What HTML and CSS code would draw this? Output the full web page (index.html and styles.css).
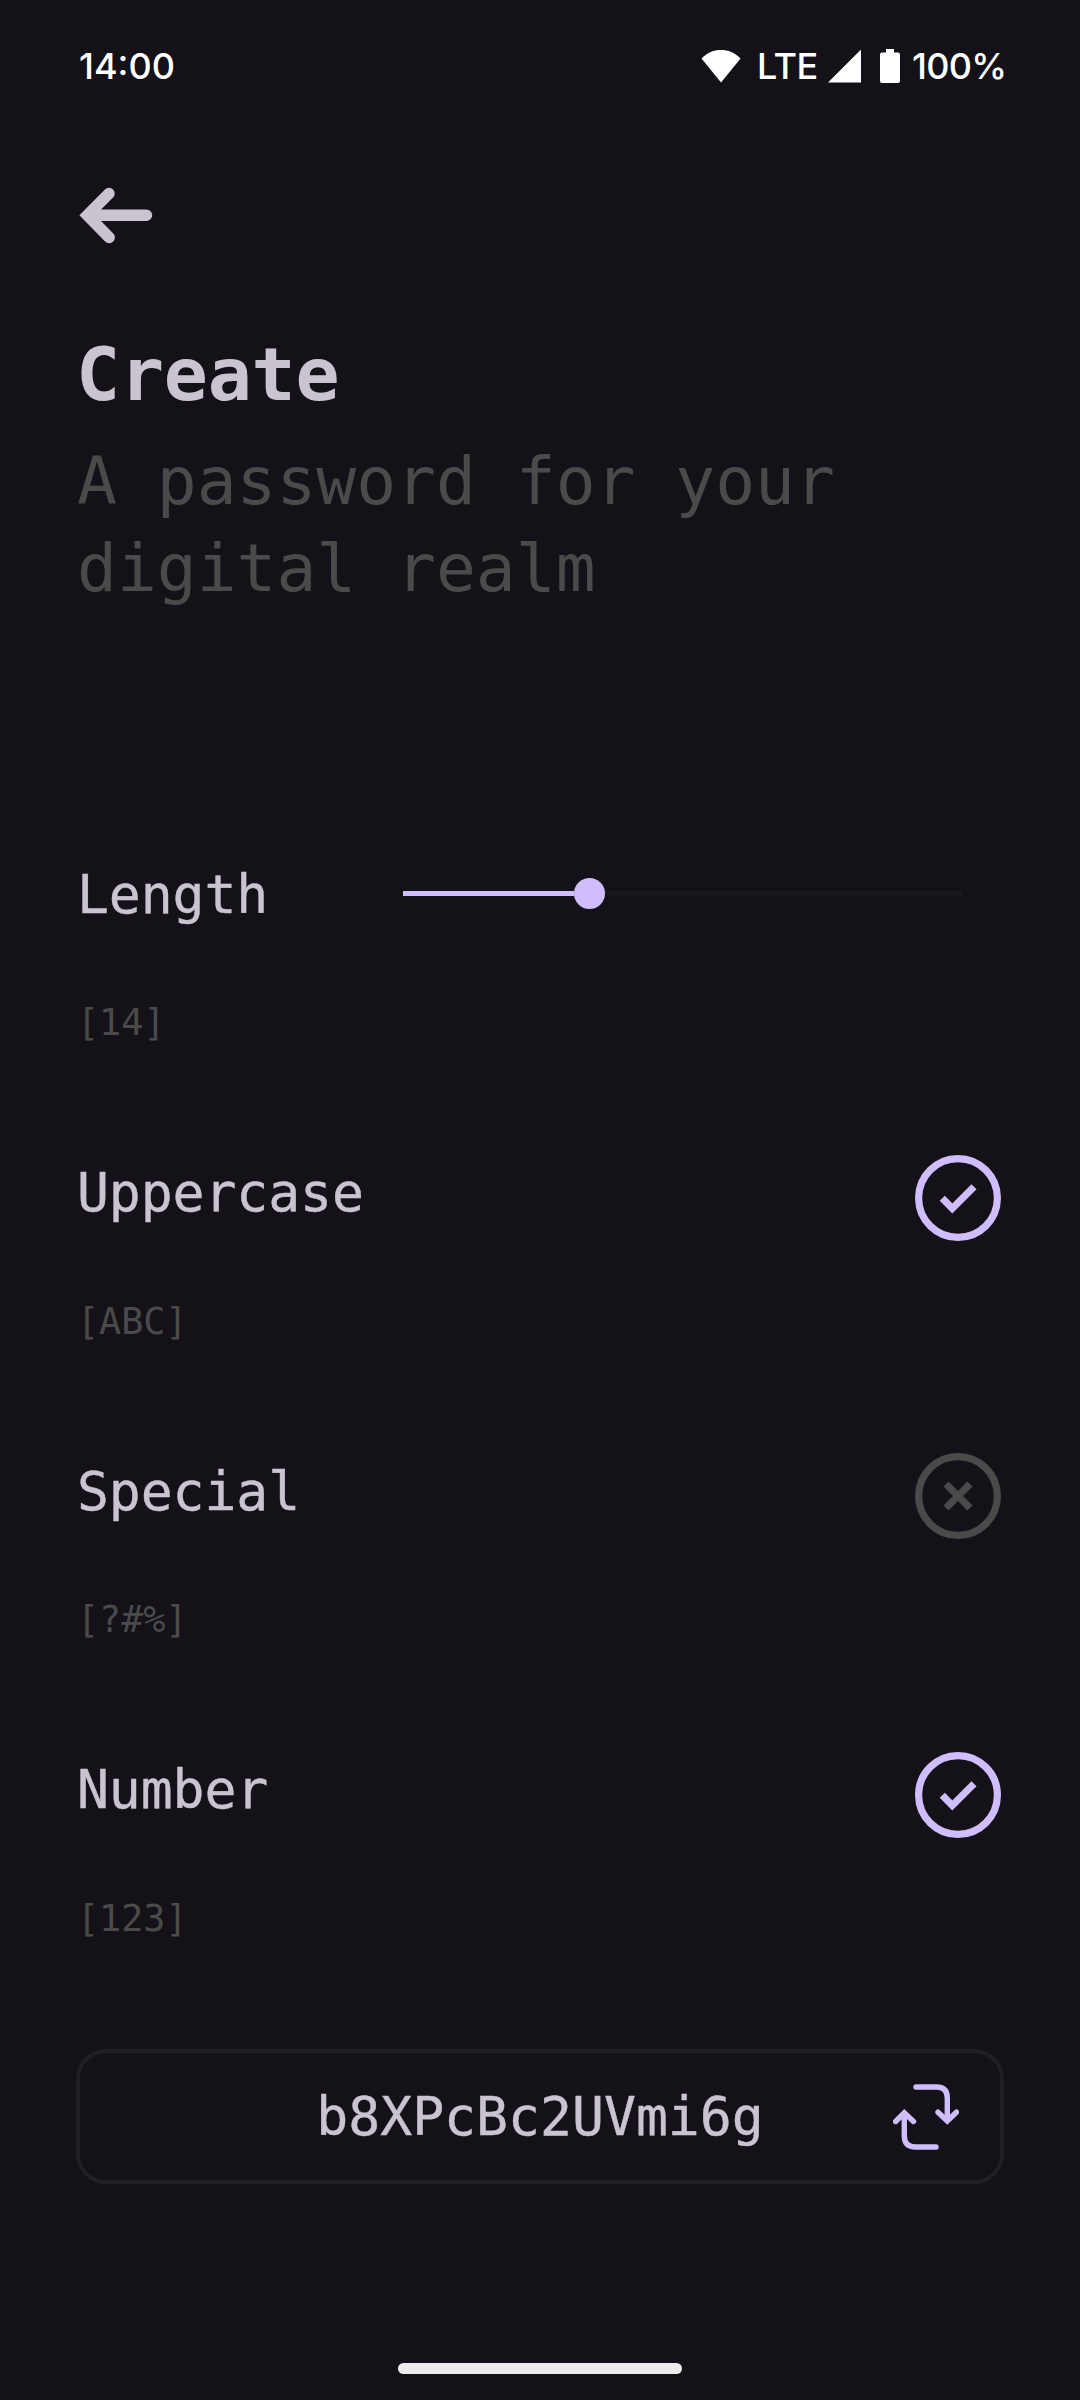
FILE: index.html
```html
<!DOCTYPE html>
<html lang="en">
<head>
<meta charset="utf-8">
<title>Create password</title>
<link rel="stylesheet" href="styles.css">
</head>
<body>
<div class="screen">
  <div class="status">
    <span class="time">14:00</span>
    <svg class="wifi" width="40" height="34" viewBox="0 0 40 34"><path d="M20 33.500 0.500 9.500C6 3.500 13 1 20 1s14 2.500 19.500 8.500z" fill="#fff"/></svg>
    <span class="lte">LTE</span>
    <svg class="signal" width="34" height="34" viewBox="0 0 34 34"><path d="M0 33.500 33 0.500v33z" fill="#fff"/></svg>
    <svg class="battery" width="20" height="34" viewBox="0 0 20 34"><path d="M6 0h8v3.500h4a2 2 0 0 1 2 2V32a2 2 0 0 1-2 2H2a2 2 0 0 1-2-2V5.500a2 2 0 0 1 2-2h4z" fill="#fff"/></svg>
    <span class="percent">100%</span>
  </div>

  <main class="content">
    <svg class="back" width="78" height="60" viewBox="0 0 78 60" fill="none" stroke="#cac4d0" stroke-width="11.400" stroke-linecap="round"><path d="M31 7.500 9.400 29.200 31.200 51.500M16 29.200H68.500"/></svg>
    <h1 class="title">Create</h1>
    <p class="subtitle">A password for your<br>digital realm</p>

    <section class="options">
      <div class="option">
        <div class="head">
          <span class="label">Length</span>
          <div class="slider"><div class="fill"></div><div class="thumb"></div><div class="rest"></div></div>
        </div>
        <div class="hint">[14]</div>
      </div>
      <div class="option">
        <div class="head">
          <span class="label">Uppercase</span>
          <svg class="toggle on" viewBox="0 0 86 86"><circle cx="43" cy="43" r="39.400"/><path d="M27.300 43.300 37.300 53.500 59 31.800"/></svg>
        </div>
        <div class="hint">[ABC]</div>
      </div>
      <div class="option">
        <div class="head">
          <span class="label">Special</span>
          <svg class="toggle off" viewBox="0 0 86 86"><circle cx="43" cy="43" r="39.400"/><path d="M31 31 55 55M55 31 31 55"/></svg>
        </div>
        <div class="hint">[?#%]</div>
      </div>
      <div class="option">
        <div class="head">
          <span class="label">Number</span>
          <svg class="toggle on" viewBox="0 0 86 86"><circle cx="43" cy="43" r="39.400"/><path d="M27.300 43.300 37.300 53.500 59 31.800"/></svg>
        </div>
        <div class="hint">[123]</div>
      </div>
    </section>

    <div class="result">
      <span class="password">b8XPcBc2UVmi6g</span>
      <svg class="refresh" width="66" height="68" viewBox="0 0 66 68" fill="none" stroke="#cfbdfe" stroke-width="5.400" stroke-linecap="round"><path d="M23 4H43.500Q54.300 4 54.300 15V37M45 29.200 54.300 38 63.400 29.200M43 64H22.500Q11.300 64 11.300 53V31M2.600 38.500 11.300 29.800 20.500 38.500"/></svg>
    </div>
  </main>

  <div class="gesture"></div>
</div>
</body>
</html>
```
FILE: styles.css
```css
* { box-sizing: border-box; }

body {
  margin: 0;
  background: #141218;
}

.screen {
  display: flex;
  flex-direction: column;
  width: 1080px;
  height: 2400px;
  background: #141218;
  color: #cac4d0;
  font-family: "DejaVu Sans Mono", monospace;
}

.status {
  display: flex;
  align-items: center;
  height: 132px;
  padding: 0 76px 0 79px;
  color: #fff;
  font: 500 36px/1 Inter, sans-serif;
}

.time { margin-right: auto; }
.lte { width: 60px; margin-left: 16px; letter-spacing: -0.500px; }
.signal { margin-left: 11px; }
.battery { margin: 0 0 0 18px; }
.percent { width: 92px; margin-left: 12px; letter-spacing: -0.700px; }

.content {
  display: flex;
  flex-direction: column;
  padding: 0 76px;
}

.back { margin: 54px 0 0 2px; }

.title {
  margin: 80.500px 0 0;
  font-size: 73.250px;
  line-height: 96px;
  letter-spacing: -0.200px;
}

.subtitle {
  margin: 15.500px 0 0;
  padding-left: 1px;
  color: #4a4a4a;
  font-size: 66.250px;
  line-height: 87px;
}

.options { margin-top: 244px; }

.option { height: 298.500px; }

.head {
  display: flex;
  align-items: center;
  justify-content: space-between;
  height: 86px;
}

.label {
  padding: 0 0 9px 1px;
  font-size: 53.100px;
  line-height: 70px;
  letter-spacing: -0.100px;
  -webkit-text-stroke: 0.400px;
}

.hint {
  margin-top: 56px;
  padding-left: 1px;
  color: #4a4a4a;
  font-size: 36.700px;
  line-height: 50px;
}

.slider {
  display: flex;
  align-items: center;
  width: 559px;
  margin: 0 42px 12px 0;
}

.fill { width: 171px; height: 5px; background: #cfbdfe; }
.thumb { width: 31px; height: 31px; border-radius: 50%; background: #cfbdfe; }
.rest { flex: 1; height: 5px; background: #1a181c; }

.toggle {
  width: 86px;
  height: 86px;
  margin-right: 3px;
  fill: none;
  stroke-width: 7.200px;
}

.on { stroke: #cfbdfe; }
.off { stroke: #4a4a4a; }

.result {
  display: grid;
  grid-template-columns: 66px 1fr 66px;
  align-items: center;
  height: 135px;
  margin-top: -1px;
  padding: 0 41px;
  border: 4px solid #211f26;
  border-radius: 30px;
}

.password {
  grid-column: 2;
  text-align: center;
  font-size: 53.100px;
  line-height: 70px;
  -webkit-text-stroke: 0.400px;
}

.gesture {
  width: 284px;
  height: 11px;
  margin: auto auto 26px;
  border-radius: 6px;
  background: #ececec;
}
```
